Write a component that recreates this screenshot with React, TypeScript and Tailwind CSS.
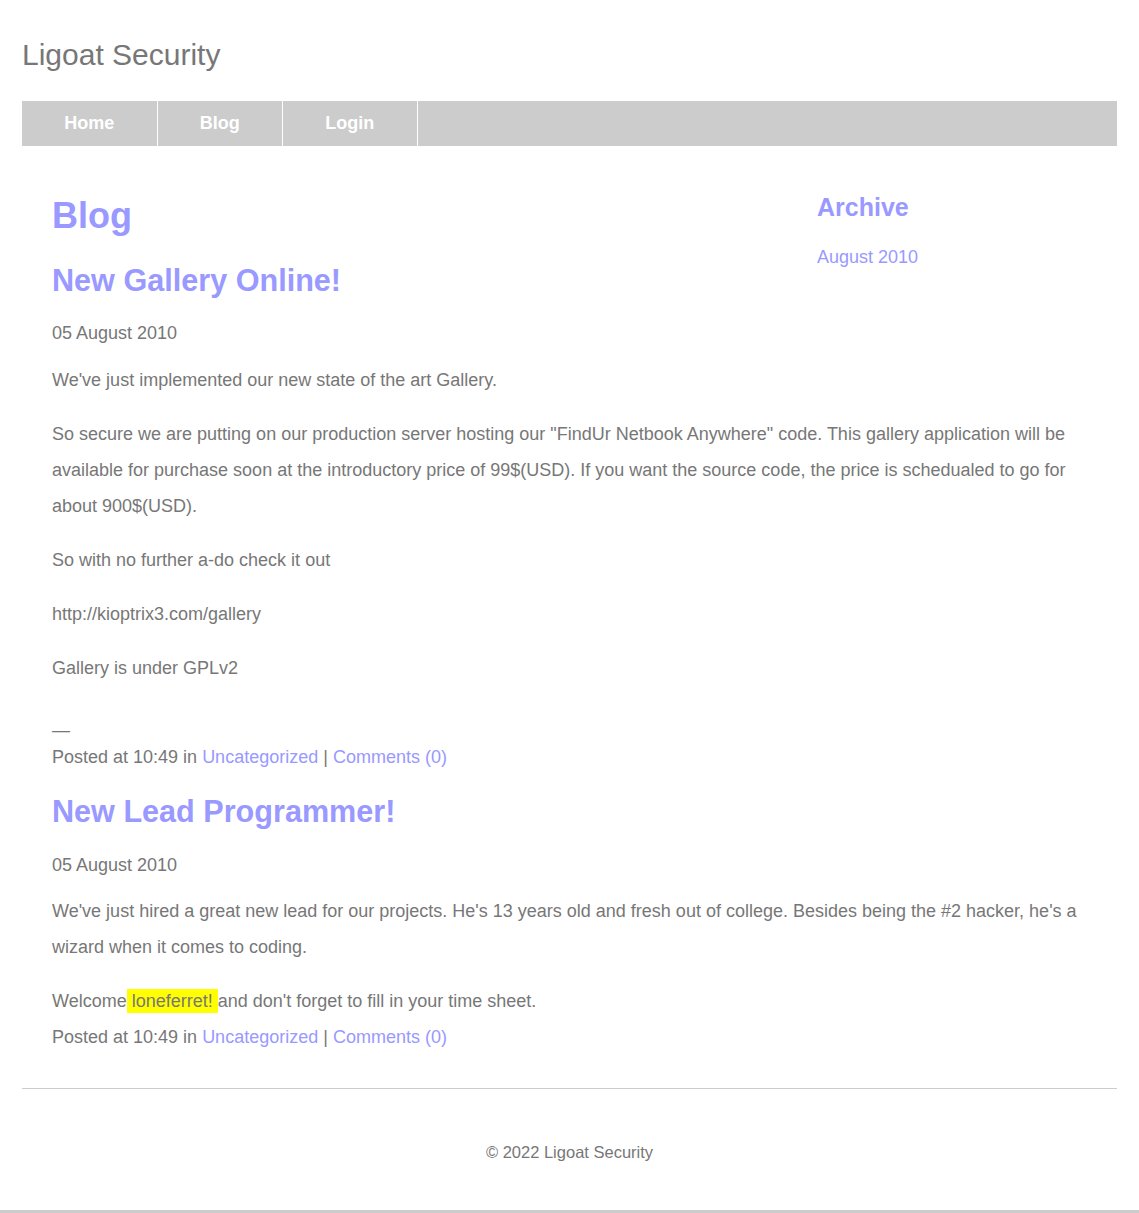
import type { ReactNode } from 'react';

const navItems = ['Home', 'Blog', 'Login'];

function PostMeta() {
  return (
    <>
      Posted at 10:49 in{' '}
      <a href="#" className="text-[#9999ff]">Uncategorized</a> |{' '}
      <a href="#" className="text-[#9999ff]">Comments (0)</a>
    </>
  );
}

function PostTitle({ children, className = '' }: { children: ReactNode; className?: string }) {
  return (
    <h2 className={`text-[30.6px] font-bold leading-[34px] text-[#9999ff] ${className}`}>
      <a href="#">{children}</a>
    </h2>
  );
}

export default function App() {
  return (
    <div className="bg-white font-['Liberation_Sans',Arial,sans-serif] text-[18px] text-[#777777]">
      <div className="px-[22px]">
        {/* header */}
        <header className="pt-[38px]">
          <h1 className="text-[30px] font-normal leading-[34px] text-[#777777]">Ligoat Security</h1>
        </header>

        <nav className="mt-[29px] flex h-[45px] bg-[#cccccc]">
          {navItems.map((item) => (
            <a
              key={item}
              href="#"
              className="border-r border-white px-[42.25px] text-[18px] font-bold leading-[45px] text-white"
            >
              {item}
            </a>
          ))}
        </nav>

        <main className="px-[30px] pb-[33px] pt-[47px]">
          {/* sidebar floats beside the first headings */}
          <aside className="float-right -mt-[1px] w-[270px]">
            <h3 className="text-[25px] font-bold leading-[30px] text-[#9999ff]">Archive</h3>
            <ul className="mt-[17px]">
              <li className="leading-[36px]">
                <a href="#" className="text-[#9999ff]">August 2010</a>
              </li>
            </ul>
          </aside>

          <h1 className="mt-[2px] text-[36px] font-bold leading-[42px] text-[#9999ff]">Blog</h1>

          {/* post 1 */}
          <article>
            <PostTitle className="mt-[26px]">New Gallery Online!</PostTitle>
            <p className="mt-[18px] leading-[36px]">05 August 2010</p>
            <div className="leading-[36px]">
              <p className="mt-[11px]">We&apos;ve just implemented our new state of the art Gallery.</p>
              <p className="mt-[18px]">
                So secure we are putting on our production server hosting our &quot;FindUr Netbook Anywhere&quot; code. This
                gallery application will be available for purchase soon at the introductory price of 99$(USD). If you
                want the source code, the price is schedualed to go for about 900$(USD).
              </p>
              <p className="mt-[18px]">So with no further a-do check it out</p>
              <p className="mt-[18px]">http://kioptrix3.com/gallery</p>
              <p className="mt-[18px]">Gallery is under GPLv2</p>
            </div>
            <div className="mt-[31px] leading-[27px]">
              —
              <br />
              <PostMeta />
            </div>
          </article>

          {/* post 2 */}
          <article>
            <PostTitle className="mt-[23px]">New Lead Programmer!</PostTitle>
            <p className="mt-[19px] leading-[36px]">05 August 2010</p>
            <div className="leading-[36px]">
              <p className="mt-[10px]">
                We&apos;ve just hired a great new lead for our projects. He&apos;s 13 years old and fresh out of college.
                Besides being the #2 hacker, he&apos;s a wizard when it comes to coding.
              </p>
              <p className="mt-[18px]">
                Welcome<span className="bg-[#ffff00] py-[2px]"> loneferret! </span>and don&apos;t forget to fill in your
                time sheet.
              </p>
              <div>
                <PostMeta />
              </div>
            </div>
          </article>
        </main>

        <footer className="border-t border-[#cccccc] pb-[46px] pt-[51px] text-center">
          <p className="text-[16.5px] leading-[24px]">© 2022 Ligoat Security</p>
        </footer>
      </div>
      <div className="h-[3px] bg-[#cccccc]" />
    </div>
  );
}
